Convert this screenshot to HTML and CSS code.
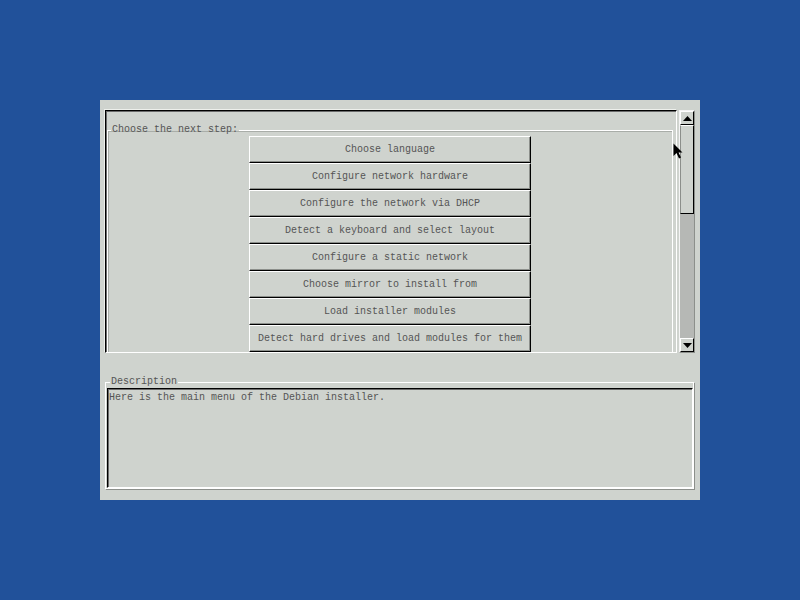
FILE: index.html
```html
<!DOCTYPE html>
<html>
<head>
<meta charset="utf-8">
<link rel="stylesheet" href="styles.css">
</head>
<body>
<div class="panel">
  <div class="top">
    <div class="list">
      <fieldset class="group">
        <legend>Choose the next step:</legend>
        <div class="buttons">
          <div class="btn">Choose language</div>
          <div class="btn">Configure network hardware</div>
          <div class="btn">Configure the network via DHCP</div>
          <div class="btn">Detect a keyboard and select layout</div>
          <div class="btn">Configure a static network</div>
          <div class="btn">Choose mirror to install from</div>
          <div class="btn">Load installer modules</div>
          <div class="btn">Detect hard drives and load modules for them</div>
        </div>
      </fieldset>
    </div>
    <div class="scroll">
      <div class="arrow"><svg width="9" height="5" viewBox="0 0 9 5"><polygon points="0,5 9,5 4.5,0" fill="#000"/></svg></div>
      <div class="thumb"></div>
      <div class="track"></div>
      <div class="arrow"><svg width="9" height="5" viewBox="0 0 9 5"><polygon points="0,0 9,0 4.5,5" fill="#000"/></svg></div>
    </div>
  </div>
  <fieldset class="desc">
    <legend>Description</legend>
    <div class="textbox">Here is the main menu of the Debian installer.</div>
  </fieldset>
  <svg class="cursor" width="11" height="17" viewBox="0 0 11 17"><polygon points="0.5,0.5 0.5,13 3.5,10 6,15.5 8,14.5 5.5,9.5 9.5,9.5" fill="#000"/></svg>
</div>
</body>
</html>
```

FILE: styles.css
```css
html, body {
  margin: 0;
  padding: 0;
}
body {
  background: #21519a;
  height: 600px;
  font-family: "Liberation Mono", "DejaVu Sans Mono", monospace;
  font-size: 10px;
  color: #555;
}
.panel {
  position: relative;
  width: 600px;
  height: 400px;
  margin: 100px auto 0;
  background: #cfd3ce;
  box-sizing: border-box;
  padding: 10px 5px 0 5px;
  display: flex;
  flex-direction: column;
}
.top {
  display: flex;
  gap: 2px;
  height: 243px;
}
.list {
  width: 572px;
  height: 243px;
  box-sizing: border-box;
  border-top: 1px solid #000;
  border-left: 1px solid #000;
  border-right: 1px solid #fff;
  border-bottom: 1px solid #fff;
  box-shadow: inset 1px 1px 0 #6a6a6a, -1px -1px 0 #eef0ec;
  overflow: hidden;
  padding: 13px 3px 0 1px;
}
fieldset {
  margin: 0;
  min-width: 0;
}
legend {
  line-height: 12px;
  padding: 0 1px;
  margin-left: 3px;
}
.group {
  border: 1px solid #fff;
  border-bottom: none;
  padding: 0;
  box-shadow: inset 1px 1px 0 #a9ada8;
}
.buttons {
  display: flex;
  flex-direction: column;
  align-items: center;
}
.btn {
  width: 282px;
  height: 27px;
  box-sizing: border-box;
  border-top: 1px solid #fff;
  border-left: 1px solid #fff;
  border-right: 1px solid #000;
  border-bottom: 1px solid #000;
  box-shadow: inset -1px -1px 0 #8c8f8b;
  line-height: 26px;
  text-align: center;
  white-space: nowrap;
}
.scroll {
  width: 16px;
  height: 243px;
  box-sizing: border-box;
  border-top: 1px solid #f4f4f4;
  border-left: 1px solid #f4f4f4;
  border-right: 1px solid #8c8f8b;
  border-bottom: 1px solid #8c8f8b;
  display: flex;
  flex-direction: column;
}
.arrow {
  height: 14px;
  box-sizing: border-box;
  border-top: 1px solid #fff;
  border-left: 1px solid #fff;
  border-right: 1px solid #000;
  border-bottom: 1px solid #000;
  display: flex;
  align-items: center;
  justify-content: center;
  flex: none;
}
.thumb {
  height: 89px;
  box-sizing: border-box;
  border-top: 1px solid #fff;
  border-left: 1px solid #8c8f8b;
  border-right: 1px solid #000;
  border-bottom: 1px solid #000;
  flex: none;
}
.track {
  flex: 1;
  background: #b6b8b5;
}
.desc {
  margin-top: 23px;
  width: 589px;
  box-sizing: border-box;
  border: 1px solid #fff;
  box-shadow: 1px 1px 0 #8c8f8b;
  padding: 0 0 0 1px;
}
.textbox {
  height: 100px;
  box-sizing: border-box;
  border-top: 1px solid #000;
  border-left: 1px solid #000;
  border-right: 1px solid #fff;
  border-bottom: 1px solid #fff;
  box-shadow: inset 1px 1px 0 #6a6a6a;
  padding: 3px 1px 0 1px;
  line-height: 12px;
  white-space: nowrap;
}
.cursor {
  position: absolute;
  left: 573px;
  top: 43px;
}
```
